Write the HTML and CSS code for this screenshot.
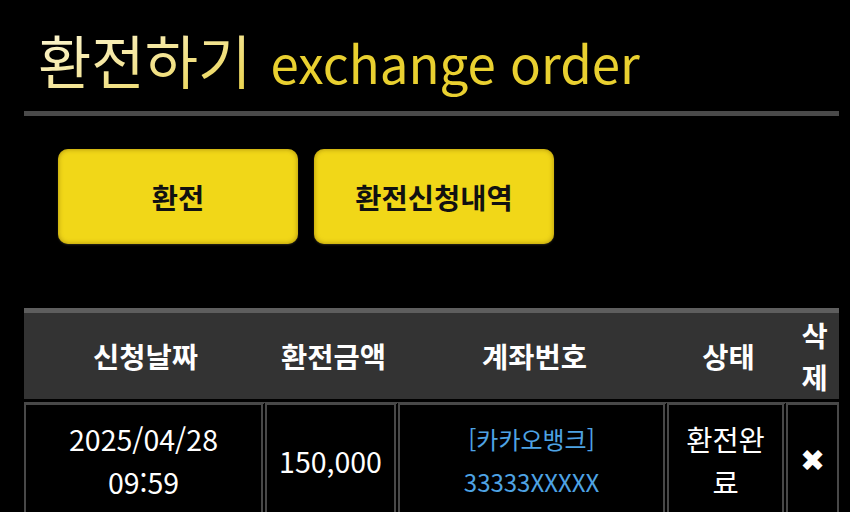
FILE: index.html
```html
<!DOCTYPE html>
<html lang="ko">
<head>
<meta charset="utf-8">
<title>환전하기</title>
<link rel="stylesheet" href="styles.css">
</head>
<body>
<div class="page">
  <h1 class="title"><span class="title-ko">환전하기</span> <span class="title-en">exchange order</span></h1>
  <div class="rule"></div>
  <div class="tabs">
    <button class="tab">환전</button>
    <button class="tab">환전신청내역</button>
  </div>
  <table class="history">
    <colgroup>
      <col class="c-date"><col class="c-amount"><col class="c-account"><col class="c-state"><col class="c-del">
    </colgroup>
    <thead>
      <tr>
        <th>신청날짜</th>
        <th>환전금액</th>
        <th>계좌번호</th>
        <th>상태</th>
        <th class="del-head">삭제</th>
      </tr>
    </thead>
    <tbody>
      <tr>
        <td>2025/04/28<br>09:59</td>
        <td>150,000</td>
        <td class="account">[카카오뱅크]<br>33333XXXXX</td>
        <td>환전완<br>료</td>
        <td class="del">&#x2716;</td>
      </tr>
    </tbody>
  </table>
</div>
</body>
</html>
```
FILE: styles.css
```css
html, body {
  margin: 0;
  padding: 0;
  background: #000;
}

body {
  font-family: "Noto Sans CJK KR", "Noto Sans", sans-serif;
  color: #fff;
}

.page {
  padding: 0 11px 0 24px;
}

.title {
  margin: 0;
  padding: 30px 0 0 14px;
  height: 111px;
  box-sizing: border-box;
  font-weight: 400;
  line-height: 1;
  white-space: nowrap;
}

.title-ko {
  font-size: 58px;
  background: linear-gradient(160deg, #fffbe0 0%, #f5e7a0 45%, #e8d040 100%);
  -webkit-background-clip: text;
  background-clip: text;
  color: transparent;
}

.title-en {
  font-size: 51px;
  color: #e9d030;
  margin-left: 10px;
}

.rule {
  height: 5px;
  background: #4a4a4a;
}

.tabs {
  display: flex;
  gap: 16px;
  padding: 33px 0 0 34px;
  height: 192px;
  box-sizing: border-box;
}

.tab {
  width: 240px;
  height: 95px;
  border: none;
  border-radius: 10px;
  background: #f1d718;
  box-shadow: inset 0 0 5px rgba(120, 90, 0, 0.6), 0 1px 2px rgba(255, 240, 150, 0.15);
  font-family: "Noto Sans CJK KR", sans-serif;
  font-weight: 700;
  font-size: 28.5px;
  color: #111;
  padding: 0;
}

.history {
  width: 815px;
  border-collapse: separate;
  border-spacing: 0;
  table-layout: fixed;
}

.c-date { width: 243px; }
.c-amount { width: 133px; }
.c-account { width: 269px; }
.c-state { width: 119px; }
.c-del { width: 51px; }

.history th {
  background: #333;
  border-top: 5px solid #5e5e5e;
  border-bottom: 3px solid #000;
  height: 86px;
  font-weight: 700;
  font-size: 28.5px;
  line-height: 42px;
  padding: 0;
  color: #fff;
}

.history th.del-head {
  padding-left: 2px;
}

.history td {
  border-top: 3px solid #484848;
  border-right: 6px double #484848;
  text-align: center;
  font-size: 28.5px;
  line-height: 43px;
  height: 110px;
  padding: 0 0 6px;
  vertical-align: middle;
}

.history td:first-child {
  border-left: 2px solid #484848;
}

.history td:last-child {
  border-right: 2px solid #484848;
}

.history td.account {
  color: #4ea3e4;
  font-size: 24px;
}

.history td.del {
  font-size: 30px;
  font-family: "DejaVu Sans", sans-serif;
}
```
